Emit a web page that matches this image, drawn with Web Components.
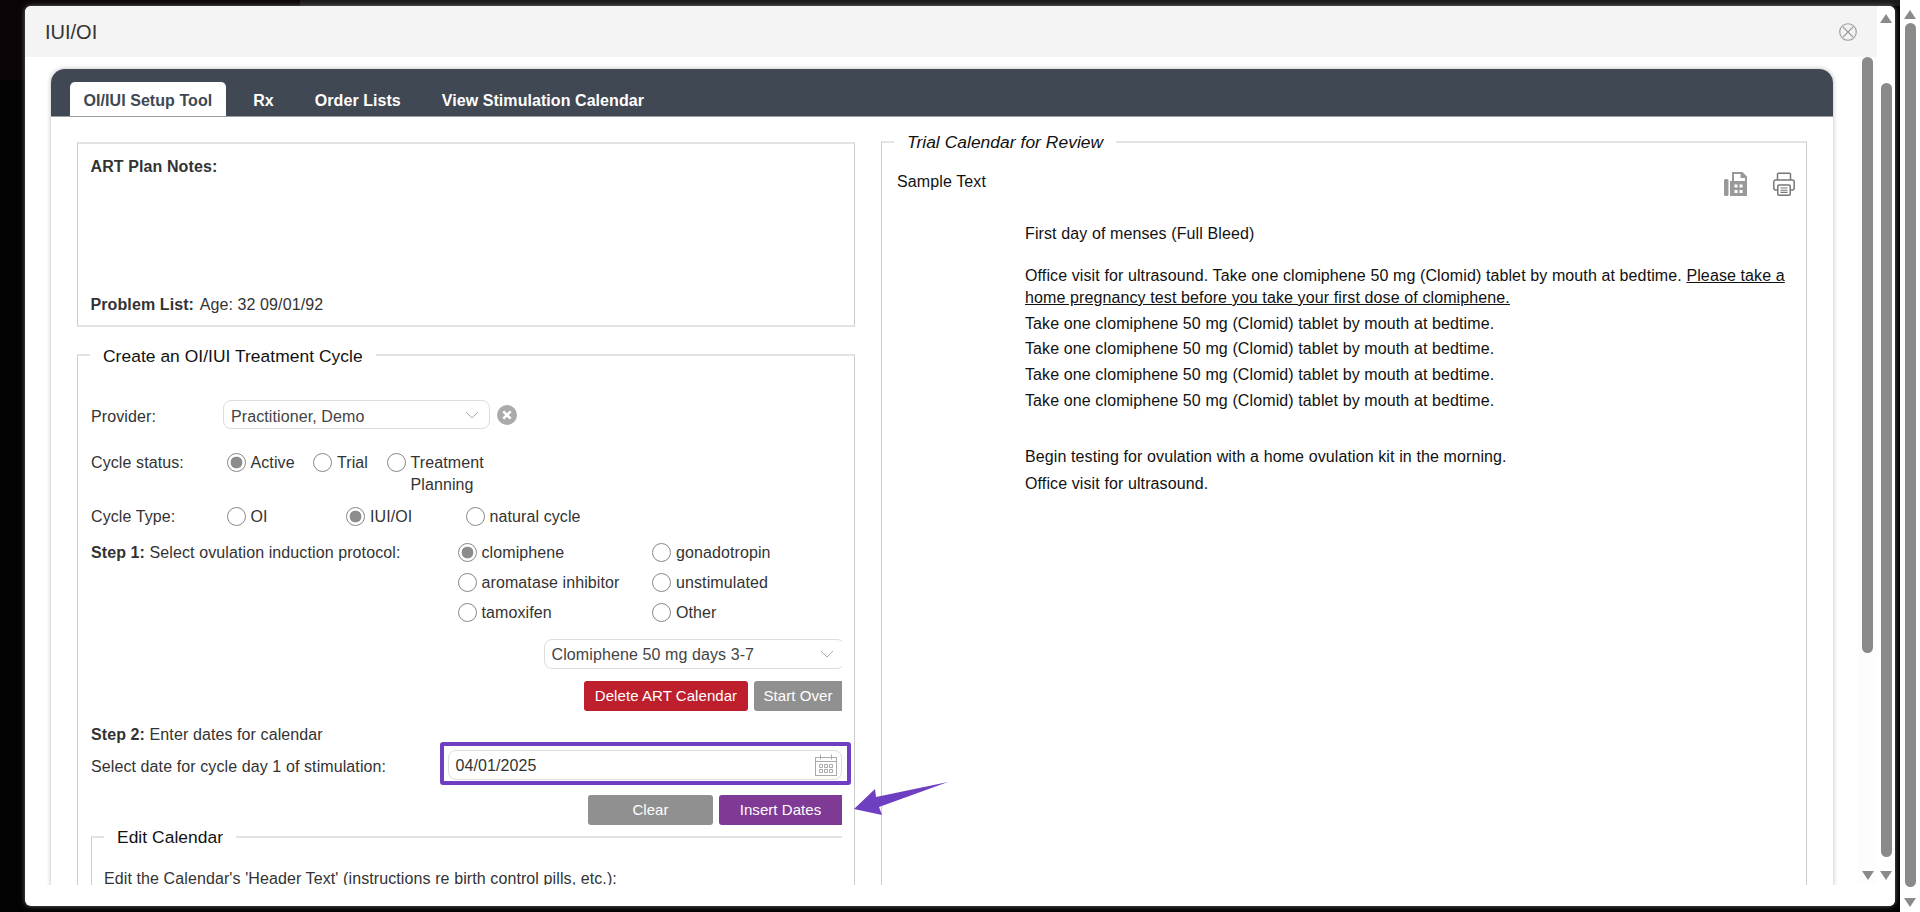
<!DOCTYPE html>
<html lang="en">
<head>
<meta charset="utf-8">
<title>IUI/OI</title>
<style>
    html, body { margin: 0; height: 100%; overflow: hidden; background: #0b0b0c; }
    body { font: 16px/22px "Liberation Sans", Arial, sans-serif; letter-spacing: .1px; color: #333; }
    .b { font-weight: bold; }
    .u { text-decoration: underline; }
</style>
</head>
<body>
<iui-app>
    <iui-modal heading="IUI/OI">
        <iui-tabs>
            <iui-tab active>OI/IUI Setup Tool</iui-tab>
            <iui-tab>Rx</iui-tab>
            <iui-tab>Order Lists</iui-tab>
            <iui-tab>View Stimulation Calendar</iui-tab>
        </iui-tabs>
        <iui-columns>
            <div slot="left">
                <iui-notes>
                    <span slot="notes">ART Plan Notes:</span>
                    <span slot="problem"><span class="b" style="margin-right:2px">Problem List:</span> Age: 32 09/01/92</span>
                </iui-notes>
                <iui-cycle-form></iui-cycle-form>
            </div>
            <iui-calendar slot="right"></iui-calendar>
        </iui-columns>
    </iui-modal>
</iui-app>

<script>
// scrollbar drawn by hand, native one can't be styled the same way
class IuiScrollbar extends HTMLElement {
    constructor() {
        super();
        this.attachShadow({mode: 'open'});
    }

    connectedCallback() {
        const top = this.getAttribute('top') || '0';
        const height = this.getAttribute('thumb') || '100';
        const w = this.getAttribute('width') || '18';
        this.shadowRoot.innerHTML = `
            <style>
                :host { display: flex; flex-direction: column; align-items: center; width: ${w}px; height: 100%; background: var(--track, #fff); flex: none; }
                .up, .down { width: 0; height: 0; border-left: 6.5px solid transparent; border-right: 6.5px solid transparent; flex: none; }
                .up { border-bottom: 9px solid #8a8a8a; margin-top: var(--arrow-top, 4px); }
                .down { border-top: 9px solid #8a8a8a; margin-bottom: var(--arrow-bottom, 3px); }
                .track { flex: 1; width: 11px; }
                .thumb { width: 11px; height: ${height}px; margin-top: ${top}px; background: #8a8a8a; border-radius: 6px; }
            </style>
            <div class="up"></div>
            <div class="track"><div class="thumb"></div></div>
            <div class="down"></div>
        `;
    }
}
customElements.define('iui-scrollbar', IuiScrollbar);

class IuiApp extends HTMLElement {
    constructor() {
        super();
        this.attachShadow({mode: 'open'});
        this.shadowRoot.innerHTML = `
            <style>
                :host { display: flex; width: 1920px; height: 912px; }
                .backdrop {
                    flex: 1; min-width: 0; padding: 6px 5px 6px 25px;
                    background:
                        linear-gradient(#0b0508, #0b0508) 0 0 / 300px 80px no-repeat,
                        linear-gradient(#1a1a1a, #1a1a1a) 300px 0 / 100% 6px no-repeat,
                        #030303;
                }
                iui-scrollbar { --arrow-top: 10px; --arrow-bottom: 5px; }
            </style>
            <div class="backdrop"><slot></slot></div>
            <iui-scrollbar width="20" top="4" thumb="864"></iui-scrollbar>
        `;
    }
}
customElements.define('iui-app', IuiApp);

class IuiModal extends HTMLElement {
    constructor() {
        super();
        this.attachShadow({mode: 'open'});
    }

    connectedCallback() {
        const heading = this.getAttribute('heading') || '';
        this.shadowRoot.innerHTML = `
            <style>
                :host { display: flex; height: 900px; background: #fff; border-radius: 6px; overflow: hidden; box-shadow: 0 0 5px rgba(255, 255, 255, .4); }
                .main { flex: 1; min-width: 0; display: flex; flex-direction: column; }
                header { height: 51px; flex: none; background: #f4f4f4; display: flex; align-items: center; justify-content: space-between; padding: 0 19px 0 20px; }
                h1 { margin: 0; font: normal 20px/26px "Liberation Sans", Arial, sans-serif; letter-spacing: 0; color: #333; }
                .scroller { height: 828px; flex: none; display: flex; overflow: hidden; background: #fdfdfd; }
                .content { width: 1833px; flex: none; padding: 12px 25px 0 26px; box-sizing: border-box; background: #fff; overflow: hidden; }
                .panel { background: #fff; box-shadow: 0 0 5px rgba(0, 0, 0, .28); border-radius: 14px 14px 0 0; height: 900px; }
                iui-scrollbar.inner { --track: #fdfdfd; --arrow-top: -9px; --arrow-bottom: 5px; }
                iui-scrollbar.outer { --arrow-top: 8px; --arrow-bottom: 26px; }
            </style>
            <div class="main">
                <header>
                    <h1>${heading}</h1>
                    <svg width="20" height="20" viewBox="0 0 20 20" fill="none" stroke="#999" stroke-width="1.1">
                        <circle cx="10" cy="10" r="8.3"/><path d="M5 5l10 10M15 5L5 15"/>
                    </svg>
                </header>
                <div class="scroller">
                    <div class="content"><div class="panel"><slot></slot></div></div>
                    <iui-scrollbar class="inner" width="19" top="0" thumb="596"></iui-scrollbar>
                </div>
            </div>
            <iui-scrollbar class="outer" width="18" top="60" thumb="774"></iui-scrollbar>
        `;
    }
}
customElements.define('iui-modal', IuiModal);

class IuiTabs extends HTMLElement {
    constructor() {
        super();
        this.attachShadow({mode: 'open'});
        this.shadowRoot.innerHTML = `
            <style>
                :host { display: flex; gap: 14px; height: 48px; box-sizing: border-box; padding: 13px 0 0 19px; background: #404854; border-radius: 14px 14px 0 0; border-bottom: 1px solid #9a9ea5; }
            </style>
            <slot></slot>
        `;
    }
}
customElements.define('iui-tabs', IuiTabs);

class IuiTab extends HTMLElement {
    constructor() {
        super();
        this.attachShadow({mode: 'open'});
        this.shadowRoot.innerHTML = `
            <style>
                :host { display: block; height: 34px; padding: 0 13.5px; font: bold 16px/38px "Liberation Sans", Arial, sans-serif; letter-spacing: .06px; color: #fff; border-radius: 5px 5px 0 0; }
                :host([active]) { background: #fff; color: #404854; }
            </style>
            <slot></slot>
        `;
    }
}
customElements.define('iui-tab', IuiTab);

class IuiColumns extends HTMLElement {
    constructor() {
        super();
        this.attachShadow({mode: 'open'});
        this.shadowRoot.innerHTML = `
            <style>
                :host { display: grid; grid-template-columns: 778px 926px; column-gap: 26px; padding: 15px 0 0 26px; }
            </style>
            <slot name="left"></slot>
            <slot name="right"></slot>
        `;
    }
}
customElements.define('iui-columns', IuiColumns);

class IuiNotes extends HTMLElement {
    constructor() {
        super();
        this.attachShadow({mode: 'open'});
        this.shadowRoot.innerHTML = `
            <style>
                :host { display: flex; flex-direction: column; justify-content: space-between; box-sizing: border-box; height: 185px; margin-top: 10px; padding: 12px 12px 9px 12.5px; border: 2px solid #e4e4e4; border-left-width: 1px; border-right-width: 1px; border-left-color: #ccc; border-right-color: #ccc; }
                .notes { font-weight: bold; }
            </style>
            <div class="notes"><slot name="notes"></slot></div>
            <div><slot name="problem"></slot></div>
        `;
    }
}
customElements.define('iui-notes', IuiNotes);

// fieldset with the line running through the legend
class IuiFieldset extends HTMLElement {
    constructor() {
        super();
        this.attachShadow({mode: 'open'});
    }

    connectedCallback() {
        const legend = this.getAttribute('legend') || '';
        this.shadowRoot.innerHTML = `
            <style>
                :host { display: block; }
                fieldset { margin: 0; min-width: 0; height: 100%; box-sizing: border-box; padding: 0; border: 1px solid #ccc; border-top: 2px solid #e4e4e4; border-bottom: 0; }
                legend { margin-left: 12px; padding: 0 13px; height: 20px; font: var(--legend-style, normal) 17.4px/var(--legend-lh, 21px) "Liberation Sans", Arial, sans-serif; letter-spacing: .05px; color: #111; white-space: nowrap; }
                .body { padding: var(--pad, 0); }
            </style>
            <fieldset><legend>${legend}</legend><div class="body"><slot></slot></div></fieldset>
        `;
    }
}
customElements.define('iui-fieldset', IuiFieldset);

class IuiRadio extends HTMLElement {
    constructor() {
        super();
        this.attachShadow({mode: 'open'});
    }

    connectedCallback() {
        const on = this.hasAttribute('checked');
        this.shadowRoot.innerHTML = `
            <style>
                :host { display: flex; gap: 5px; align-items: flex-start; color: #333; }
                input { appearance: none; flex: none; width: 19px; height: 19px; margin: 1px 0 0; border: 1px solid #888; border-radius: 50%; background: #fff; box-sizing: border-box; }
                input:checked { background: radial-gradient(circle, #8c8c8c 0, #8c8c8c 5.6px, #fff 6.2px); border-color: #888; }
                label { line-height: var(--radio-lh, 22px); }
            </style>
            <input type="radio" ${on ? 'checked' : ''}><label><slot></slot></label>
        `;
    }
}
customElements.define('iui-radio', IuiRadio);

class IuiSelect extends HTMLElement {
    constructor() {
        super();
        this.attachShadow({mode: 'open'});
        this.shadowRoot.innerHTML = `
            <style>
                :host { display: flex; align-items: center; justify-content: space-between; box-sizing: border-box; height: 30px; padding: 0 10px 0 7px; background: #fff; border: 1px solid #ddd; border-radius: 8px; color: #444; }
                .t { padding-top: var(--text-pad, 2px); }
            </style>
            <span class="t"><slot></slot></span>
            <svg width="14" height="8" viewBox="0 0 14 8" fill="none" stroke="#aaa" stroke-width="1"><path d="M1 1l6 6 6-6"/></svg>
        `;
    }
}
customElements.define('iui-select', IuiSelect);

class IuiDate extends HTMLElement {
    constructor() {
        super();
        this.attachShadow({mode: 'open'});
        this.shadowRoot.innerHTML = `
            <style>
                :host { display: flex; align-items: center; justify-content: space-between; box-sizing: border-box; height: 30px; padding: 0 4px 0 7px; background: #fff; border: 1px solid #ddd; border-radius: 8px; color: #333; }
                .t { padding-top: 2px; }
            </style>
            <span class="t"><slot></slot></span>
            <svg width="22" height="22" viewBox="0 0 22 22" fill="none" stroke="#aaa" stroke-width="1">
                <rect x=".5" y="3.500" width="21" height="18"/>
                <path d="M.5 7.500h21M5.500 .5v5M16.500 .5v5" />
                <path d="M4.500 10.500h3v3h-3zM9.500 10.500h3v3h-3zM14.500 10.500h3v3h-3zM4.500 15.500h3v3h-3zM9.500 15.500h3v3h-3zM14.500 15.500h3v3h-3z"/>
            </svg>
        `;
    }
}
customElements.define('iui-date', IuiDate);

class IuiButton extends HTMLElement {
    constructor() {
        super();
        this.attachShadow({mode: 'open'});
        this.shadowRoot.innerHTML = `
            <style>
                :host { display: block; height: 30px; box-sizing: border-box; text-align: center; font: 15px/30px "Liberation Sans", Arial, sans-serif; letter-spacing: .06px; color: #fff; background: var(--bg, #909090); border-radius: 3px 0 0 3px; }
                :host([rounded]) { border-radius: 3px; }
            </style>
            <slot></slot>
        `;
    }
}
customElements.define('iui-button', IuiButton);

class IuiCycleForm extends HTMLElement {
    constructor() {
        super();
        this.attachShadow({mode: 'open'});
        this.shadowRoot.innerHTML = `
            <style>
                :host { display: block; margin-top: 18px; height: 900px; --legend-lh: 22px; }
                iui-fieldset.main { --pad: 0 12px 0 13px; height: 100%; }
                iui-fieldset.edit { --pad: 0 0 0 12px; width: 780px; --legend-lh: 21px; }
                .b { font-weight: bold; }
                .grid { display: grid; grid-template-columns: 132px 1fr; align-items: start; }
                .row1 { margin-top: 35px; align-items: center; }
                .row1 > div:first-child { padding-top: 4px; }
                .provider { display: flex; align-items: center; gap: 7px; }
                .provider iui-select { width: 267px; height: 29px; --text-pad: 4px; }
                .status { display: grid; grid-template-columns: 86.5px 73.5px 110px; padding-left: 3.5px; --radio-lh: 21.5px; }
                .type { display: grid; grid-template-columns: 119.5px 119.5px 160px; padding-left: 3.5px; }
                .step1 { display: grid; grid-template-columns: 366.5px 194.5px 1fr; row-gap: 8px; margin-top: 14px; }
                .clip { overflow: hidden; }
                .sel { margin: 15px -3px 0 452.5px; }
                .btns { display: flex; justify-content: flex-end; gap: 6px; margin-top: 12px; }
                .date { position: relative; display: grid; grid-template-columns: 356.5px 1fr; align-items: center; margin-top: 4px; }
                .date > div:first-child { padding-top: 4px; }
                /* the highlight box drawn over the date field */
                .mark { position: absolute; left: 349px; right: -9px; top: -8px; bottom: -5px; border: 4px solid #6f3fc1; border-radius: 3px; pointer-events: none; }
                .arrow { position: absolute; right: -106px; top: -15px; }
            </style>
            <iui-fieldset class="main" legend="Create an OI/IUI Treatment Cycle">
                <div class="grid row1">
                    <div>Provider:</div>
                    <div class="provider">
                        <iui-select>Practitioner, Demo</iui-select>
                        <svg width="20" height="20" viewBox="0 0 20 20"><circle cx="10" cy="10" r="10" fill="#aaa"/><path d="M6.300 6.300l7.400 7.400M13.700 6.300l-7.400 7.400" stroke="#fff" stroke-width="2.600"/></svg>
                    </div>
                </div>
                <div class="grid" style="margin-top:23px">
                    <div>Cycle status:</div>
                    <div class="status">
                        <iui-radio checked>Active</iui-radio>
                        <iui-radio>Trial</iui-radio>
                        <iui-radio>Treatment Planning</iui-radio>
                    </div>
                </div>
                <div class="grid" style="margin-top:11px">
                    <div>Cycle Type:</div>
                    <div class="type">
                        <iui-radio>OI</iui-radio>
                        <iui-radio checked>IUI/OI</iui-radio>
                        <iui-radio>natural cycle</iui-radio>
                    </div>
                </div>
                <div class="step1">
                    <div><span class="b">Step 1:</span> Select ovulation induction protocol:</div>
                    <iui-radio checked>clomiphene</iui-radio>
                    <iui-radio>gonadotropin</iui-radio>
                    <div></div>
                    <iui-radio>aromatase inhibitor</iui-radio>
                    <iui-radio>unstimulated</iui-radio>
                    <div></div>
                    <iui-radio>tamoxifen</iui-radio>
                    <iui-radio>Other</iui-radio>
                </div>
                <div class="clip"><iui-select class="sel">Clomiphene 50 mg days 3-7</iui-select></div>
                <div class="btns">
                    <iui-button rounded style="--bg:#bd1f2d;width:164px">Delete ART Calendar</iui-button>
                    <iui-button style="width:88px">Start Over</iui-button>
                </div>
                <div style="margin-top:13px"><span class="b">Step 2:</span> Enter dates for calendar</div>
                <div class="date">
                    <div>Select date for cycle day 1 of stimulation:</div>
                    <iui-date>04/01/2025</iui-date>
                    <div class="mark"></div>
                </div>
                <div class="btns" style="margin-top:15px;position:relative">
                    <iui-button rounded style="width:125px">Clear</iui-button>
                    <iui-button style="--bg:#7f3a96;width:123px">Insert Dates</iui-button>
                    <svg class="arrow" width="96" height="36" viewBox="0 0 96 36"><path d="M2 29L23 9l1 8L96 2 27 27l3 8z" fill="#6f3fc1"/></svg>
                </div>
                <div class="clip" style="margin-top:2px">
                    <iui-fieldset class="edit" legend="Edit Calendar">
                        <div style="margin-top:21px;white-space:nowrap">Edit the Calendar's 'Header Text' (instructions re birth control pills, etc.):</div>
                    </iui-fieldset>
                </div>
            </iui-fieldset>
        `;
    }
}
customElements.define('iui-cycle-form', IuiCycleForm);

class IuiCalendar extends HTMLElement {
    constructor() {
        super();
        this.attachShadow({mode: 'open'});
        this.shadowRoot.innerHTML = `
            <style>
                :host { display: block; height: 900px; color: #111; --legend-style: italic; --legend-lh: 20px; letter-spacing: .11px; }
                iui-fieldset { --pad: 0 0 0 15px; height: 100%; }
                .top { display: flex; justify-content: space-between; align-items: flex-start; margin-top: 19px; padding-right: 11px; }
                .icons { display: flex; gap: 25px; margin-top: 1px; }
                .lines { margin: 27px 16px 0 128px; line-height: 22px; }
                .lines > div { margin-top: 3.7px; }
                .lines > .gap { margin-top: 20px; }
                .u { text-decoration: underline; }
            </style>
            <iui-fieldset legend="Trial Calendar for Review">
                <div class="top">
                    <span>Sample Text</span>
                    <div class="icons">
                        <svg width="24" height="24" viewBox="0 0 24 24" fill="#999">
                            <rect x="0" y="7" width="4.500" height="17" rx="1.500"/>
                            <path d="M6 24V9h2V0h10.500L23 4.500V24H6zM10 2v7h11V6h-4.500V2z" fill-rule="evenodd"/>
                            <path fill="#fff" d="M10.500 12.500h3v3h-3zM15.500 12.500h3v3h-3zM10.500 18h3v3h-3zM15.500 18h3v3h-3z"/>
                        </svg>
                        <svg width="22" height="24" viewBox="0 0 22 24" fill="none" stroke="#777" stroke-width="1.500">
                            <path d="M4.500 8V2.200a1 1 0 0 1 1-1h11a1 1 0 0 1 1 1V8"/>
                            <path d="M4.500 18H2.800A2 2 0 0 1 .8 16V10a2 2 0 0 1 2-2h16.400a2 2 0 0 1 2 2v6a2 2 0 0 1-2 2h-1.700"/>
                            <rect x="4.800" y="13" width="12.400" height="10.200" rx="1"/>
                            <path d="M7.500 16h7M7.500 18.200h7M7.500 20.400h7" stroke-width="1.100"/>
                        </svg>
                    </div>
                </div>
                <div class="lines">
                    <div style="margin-top:0">First day of menses (Full Bleed)</div>
                    <div class="gap">Office visit for ultrasound. Take one clomiphene 50 mg (Clomid) tablet by mouth at bedtime. <span class="u">Please take a</span></div>
                    <div class="u" style="margin-top:0">home pregnancy test before you take your first dose of clomiphene.</div>
                    <div>Take one clomiphene 50 mg (Clomid) tablet by mouth at bedtime.</div>
                    <div>Take one clomiphene 50 mg (Clomid) tablet by mouth at bedtime.</div>
                    <div>Take one clomiphene 50 mg (Clomid) tablet by mouth at bedtime.</div>
                    <div>Take one clomiphene 50 mg (Clomid) tablet by mouth at bedtime.</div>
                    <div style="margin-top:34.5px">Begin testing for ovulation with a home ovulation kit in the morning.</div>
                    <div style="margin-top:4.500px">Office visit for ultrasound.</div>
                </div>
            </iui-fieldset>
        `;
    }
}
customElements.define('iui-calendar', IuiCalendar);
</script>
</body>
</html>
